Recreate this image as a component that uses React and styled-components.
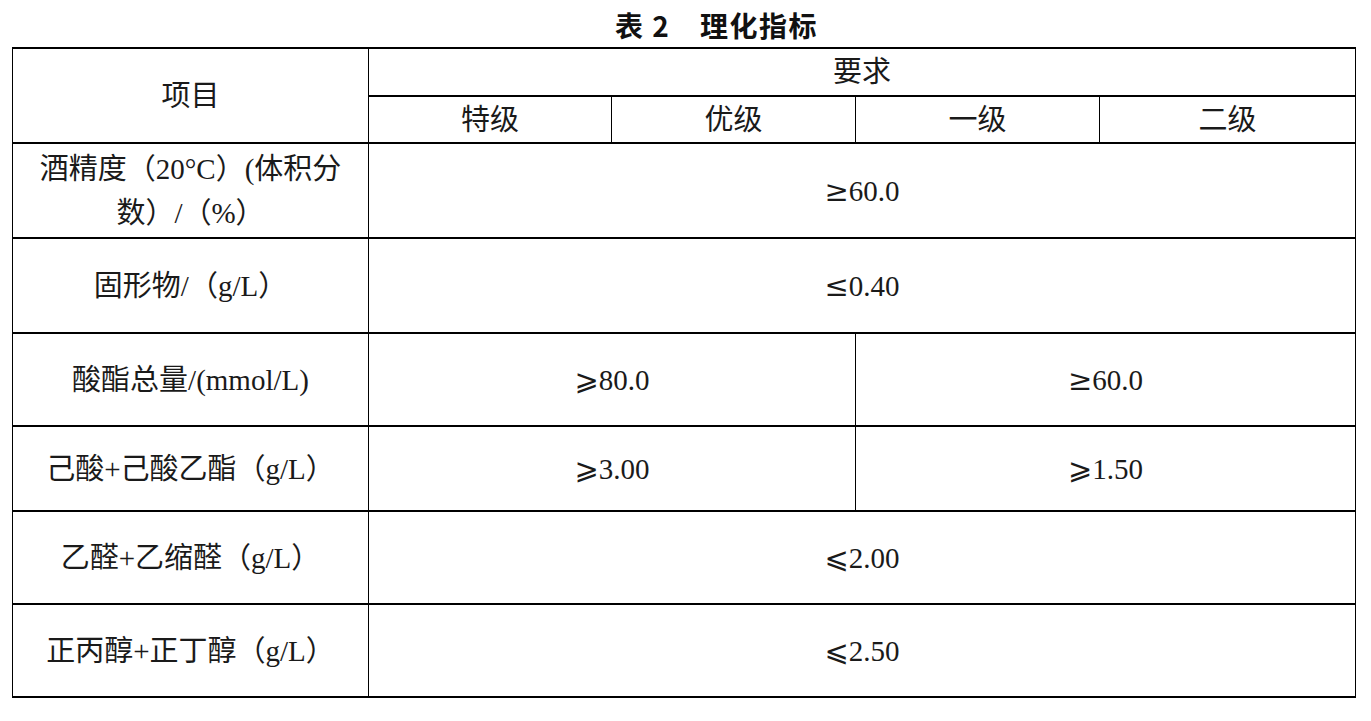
import styled, { createGlobalStyle } from "styled-components";

const Global = createGlobalStyle`
  body {
    margin: 0;
    background: #fff;
  }
`

const Page = styled.div`
  width: 1371px;
  height: 721px;
  padding: 0 16px 0 12px;
  box-sizing: border-box;
  overflow: hidden;
`
const Title = styled.h2`
  margin: 0;
  height: 47px;
  padding-left: 603px;
  font-family: "Noto Sans CJK SC", sans-serif;
  font-weight: 700;
  font-size: 28px;
  letter-spacing: 1.5px;
  line-height: 50px;
  color: #111;
  white-space: pre;
`
const Table = styled.table`
  width: 1343px;
  border-collapse: collapse;
  table-layout: fixed;
  font-family: "Liberation Serif", "Noto Sans CJK SC", serif;
  font-size: 29px;
  color: #1a1a1a;
`
const Cell = styled.td`
  border-left: 1px solid #000;
  border-right: 1px solid #000;
  border-top: 2px solid #000;
  border-bottom: 2px solid #000;
  height: ${(p) => p.h || 93}px;
  padding: 0 ${(p) => (p.wide ? 18 : 0)}px;
  text-align: center;
  vertical-align: middle;
  line-height: ${(p) => (p.wide ? 44 : 32)}px;
  font-weight: 400;
  box-sizing: border-box;
`
const Sign = styled.span`
  font-family: "DejaVu Serif", "DejaVu Sans", serif;
  font-size: 29px;
`

const rows = [
  { name: "酒精度（20°C）(体积分数）/（%）", h: 95, wide: true, vals: [["≥", "60.0", 4]] },
  { name: "固形物/（g/L）", h: 95, vals: [["≤", "0.40", 4]] },
  { name: "酸酯总量/(mmol/L)", h: 93, vals: [["⩾", "80.0", 2], ["≥", "60.0", 2]] },
  { name: "己酸+己酸乙酯（g/L）", h: 85, vals: [["⩾", "3.00", 2], ["⩾", "1.50", 2]] },
  { name: "乙醛+乙缩醛（g/L）", h: 93, vals: [["⩽", "2.00", 4]] },
  { name: "正丙醇+正丁醇（g/L）", h: 93, vals: [["⩽", "2.50", 4]] },
]

export default function App() {
  return (
    <Page>
      <Global />
      <Title>{"表 2　理化指标"}</Title>
      <Table>
        <colgroup>
          <col style={{ width: 356 }} />
          <col style={{ width: 243 }} />
          <col style={{ width: 244 }} />
          <col style={{ width: 244 }} />
          <col style={{ width: 256 }} />
        </colgroup>
        <tbody>
          <tr>
            <Cell rowSpan={2} h={48}>项目</Cell>
            <Cell colSpan={4} h={48}>要求</Cell>
          </tr>
          <tr>
            <Cell h={47}>特级</Cell>
            <Cell h={47}>优级</Cell>
            <Cell h={47}>一级</Cell>
            <Cell h={47}>二级</Cell>
          </tr>
          {rows.map((r) => (
            <tr key={r.name}>
              <Cell h={r.h} wide={r.wide}>{r.name}</Cell>
              {r.vals.map(([s, v, span], i) => (
                <Cell key={i} colSpan={span} h={r.h}>
                  <Sign>{s}</Sign>{v}
                </Cell>
              ))}
            </tr>
          ))}
        </tbody>
      </Table>
    </Page>
  );
}
